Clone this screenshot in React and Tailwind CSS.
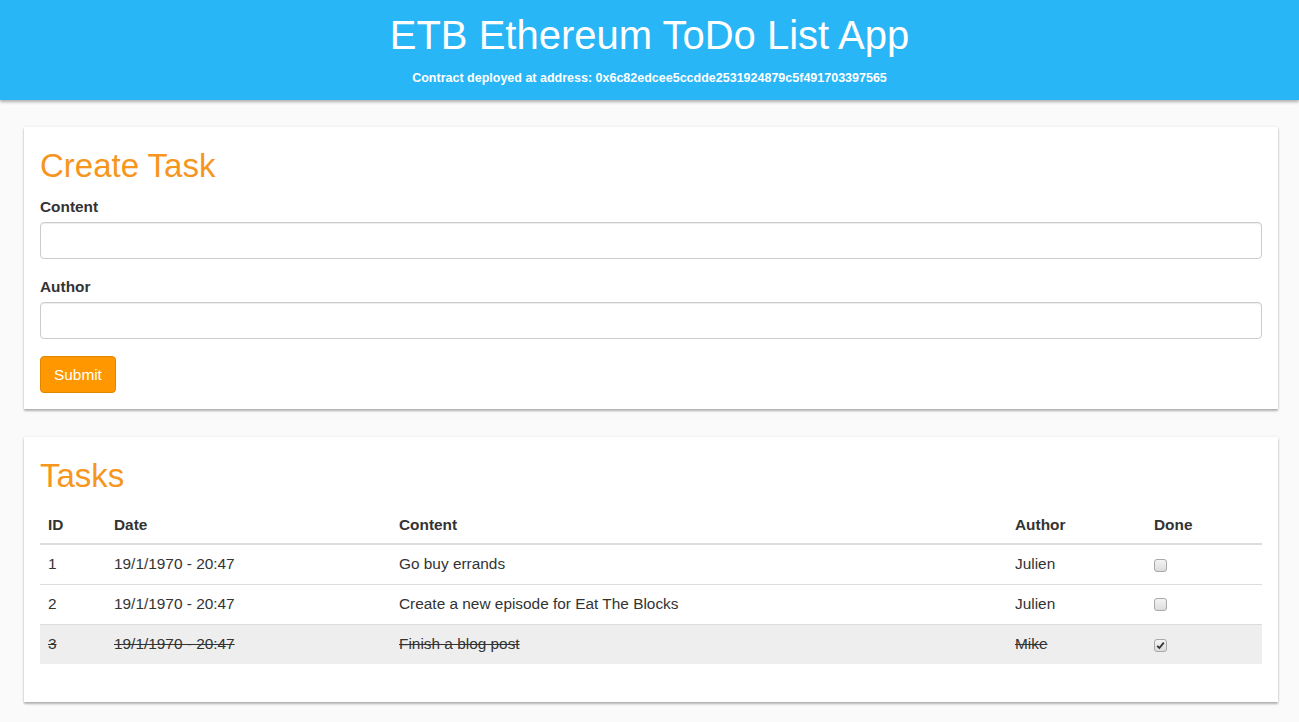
const tasks = [
  { id: 1, date: '19/1/1970 - 20:47', content: 'Go buy errands', author: 'Julien', done: false },
  { id: 2, date: '19/1/1970 - 20:47', content: 'Create a new episode for Eat The Blocks', author: 'Julien', done: false },
  { id: 3, date: '19/1/1970 - 20:47', content: 'Finish a blog post', author: 'Mike', done: true },
];

function Box({ checked }) {
  return (
    <span className="inline-flex w-[13px] h-[13px] items-center justify-center rounded-[3px] border border-[#a9a9a9] bg-gradient-to-b from-[#f4f4f4] to-[#dcdcdc]">
      {checked && (
        <svg width="9" height="9" viewBox="0 0 9 9">
          <path d="M1.2 4.8 L3.4 7 L7.8 1.6" fill="none" stroke="#333" strokeWidth="1.8" />
        </svg>
      )}
    </span>
  );
}

function Card({ title, children, className = '' }) {
  return (
    <section className={`bg-white px-4 pt-[21px] shadow-[0_2px_2px_rgba(0,0,0,0.28),0_0_3px_rgba(0,0,0,0.08)] ${className}`}>
      <h2 className="text-[33px] leading-[36px] text-[#f6961e] mb-[12px]">{title}</h2>
      {children}
    </section>
  );
}

export default function App() {
  return (
    <div className="min-h-[722px] bg-[#fafafa] text-[#333] font-['Liberation_Sans',Arial,sans-serif] text-[15.4px] leading-[22px]">
      <header className="bg-[#29b6f6] text-white text-center h-[100px] pt-[13px] shadow-[0_2px_3px_rgba(0,0,0,0.3)]">
        <h1 className="text-[40px] leading-[44px]">ETB Ethereum ToDo List App</h1>
        <p className="mt-[11px] text-[12.5px] leading-[20px] font-bold">
          Contract deployed at address: 0x6c82edcee5ccdde2531924879c5f491703397565
        </p>
      </header>

      <main className="pl-6 pr-[21px] pt-[27px] flex flex-col gap-[28px]">
        <Card title="Create Task" className="pb-4">
          <form onSubmit={(e) => e.preventDefault()}>
            <label className="block font-bold mb-[4px]">Content</label>
            <input className="block w-full h-[37px] rounded-[4px] border border-[#ccc] shadow-[inset_0_1px_1px_rgba(0,0,0,0.075)] px-3 mb-[17px]" />
            <label className="block font-bold mb-[4px]">Author</label>
            <input className="block w-full h-[37px] rounded-[4px] border border-[#ccc] shadow-[inset_0_1px_1px_rgba(0,0,0,0.075)] px-3 mb-[17px]" />
            <button
              type="submit"
              className="h-[37px] px-[13px] rounded-[4px] bg-[#ff9800] border border-[#e08600] text-white text-[15.4px]"
            >
              Submit
            </button>
          </form>
        </Card>

        <Card title="Tasks" className="pb-[38px]">
          <table className="w-full border-collapse text-left">
            <thead>
              <tr className="border-b-2 border-[#ddd]">
                <th className="w-[66px] h-[38px] px-2 font-bold">ID</th>
                <th className="w-[285px] px-2 font-bold">Date</th>
                <th className="w-[616px] px-2 font-bold">Content</th>
                <th className="w-[139px] px-2 font-bold">Author</th>
                <th className="px-2 font-bold">Done</th>
              </tr>
            </thead>
            <tbody>
              {tasks.map((t, i) => (
                <tr key={t.id} className={`${i > 0 ? 'border-t border-[#ddd]' : ''} ${t.done ? 'bg-[#eee] line-through' : ''}`}>
                  <td className="h-[40px] px-2">{t.id}</td>
                  <td className="px-2">{t.date}</td>
                  <td className="px-2">{t.content}</td>
                  <td className="px-2">{t.author}</td>
                  <td className="px-2">
                    <span className="inline-flex align-middle">
                      <Box checked={t.done} />
                    </span>
                  </td>
                </tr>
              ))}
            </tbody>
          </table>
        </Card>
      </main>
    </div>
  );
}
